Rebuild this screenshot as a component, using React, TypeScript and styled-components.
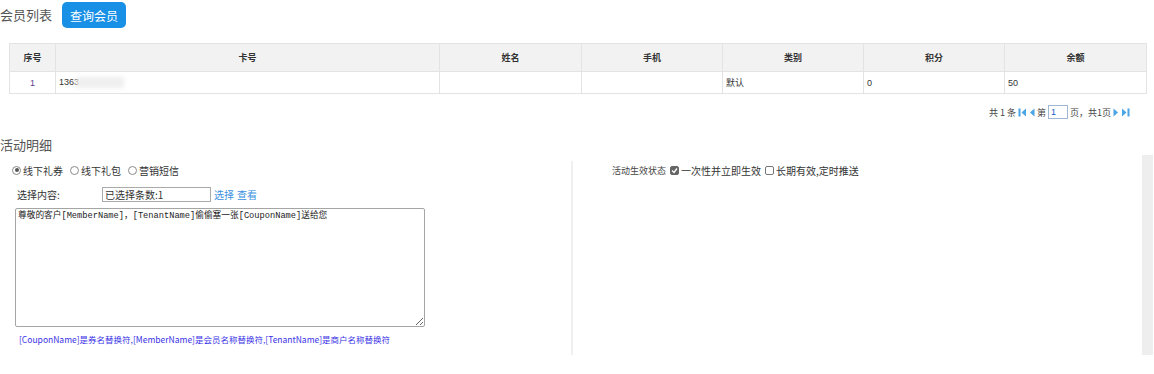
import React, { useState } from 'react'
import styled, { createGlobalStyle } from 'styled-components'

const GlobalStyle = createGlobalStyle`
  body {
    margin: 0;
    background: #fff;
    font-family: "Liberation Sans", "Noto Sans CJK SC", sans-serif;
    color: #333;
  }
`

const Page = styled.div`
  width: 1154px;
  height: 374px;
  overflow: hidden;
`

const HeadBar = styled.div`
  display: flex;
  align-items: center;
  gap: 10px;
  height: 26px;
  padding-top: 2px;
`

const Title = styled.div`
  font-size: 13px;
  color: #555;
  line-height: 18px;
  font-family: "Noto Sans CJK SC", sans-serif;
`

const QueryButton = styled.button`
  height: 26px;
  padding: 0 8px;
  border: none;
  border-radius: 5px;
  background: #1890e6;
  color: #fff;
  font-size: 12px;
  font-family: "Noto Sans CJK SC", sans-serif;
  cursor: pointer;
`

const Table = styled.table`
  margin: 15px 0 0 9px;
  width: 1137px;
  border-collapse: collapse;
  table-layout: fixed;
  font-size: 9px;
  th, td {
    border: 1px solid #e3e3e3;
    padding: 0 3px;
    white-space: nowrap;
    overflow: hidden;
  }
  th {
    height: 27px;
    background: #f2f2f2;
    font-weight: bold;
    color: #333;
    text-align: center;
  }
  td {
    height: 21px;
    color: #333;
  }
`

const IndexCell = styled.td`
  text-align: center;
  && {
    color: #5b3b8c;
  }
`

const Blurred = styled.span`
  display: inline-block;
  width: 48px;
  height: 11px;
  vertical-align: middle;
  background: #efefef;
  filter: blur(2px);
  margin-left: -3px;
`

const Pager = styled.div`
  display: flex;
  justify-content: flex-end;
  align-items: center;
  gap: 2px;
  height: 16px;
  margin-top: 10px;
  padding-right: 24px;
  font-size: 9px;
  color: #444;
  font-family: "Noto Sans CJK SC", sans-serif;
`

const PageInput = styled.input`
  width: 20px;
  height: 14px;
  box-sizing: border-box;
  border: 1px solid #9fb7d4;
  font-size: 9px;
  padding: 0 2px;
  color: #1a5ec9;
`

const PagerIcon = ({ kind }: { kind: 'first' | 'prev' | 'next' | 'last' }) => (
  <svg width={kind === 'first' || kind === 'last' ? 9 : 6} height="9" viewBox={kind === 'first' || kind === 'last' ? '0 0 9 9' : '0 0 6 9'}>
    {kind === 'first' && (
      <>
        <rect x="0.5" y="0.5" width="2" height="8" fill="#4ba4e6" />
        <polygon points="8,0.5 3.5,4.5 8,8.5" fill="#4ba4e6" />
      </>
    )}
    {kind === 'prev' && <polygon points="5.5,0.5 1,4.5 5.5,8.5" fill="#4ba4e6" />}
    {kind === 'next' && <polygon points="0.5,0.5 5,4.5 0.5,8.5" fill="#4ba4e6" />}
    {kind === 'last' && (
      <>
        <polygon points="1,0.5 5.5,4.5 1,8.5" fill="#4ba4e6" />
        <rect x="6.5" y="0.5" width="2" height="8" fill="#4ba4e6" />
      </>
    )}
  </svg>
)

const SectionTitle = styled(Title)`
  margin-top: 16px;
`

const Detail = styled.div`
  display: flex;
  height: 200px;
  margin-top: 1px;
`

const LeftPanel = styled.div`
  width: 571px;
  padding: 8px 0 0 10px;
  box-sizing: border-box;
  font-family: "Noto Sans CJK SC", sans-serif;
  font-size: 10px;
  color: #333;
`

const Divider = styled.div`
  width: 2px;
  margin-top: 6px;
  background: #efefef;
`

const RightPanel = styled.div`
  flex: 1;
  padding: 8px 0 0 39px;
  font-family: "Noto Sans CJK SC", sans-serif;
  font-size: 10px;
  color: #333;
`

const StateLabel = styled.span`
  font-size: 9px;
  color: #444;
`

const ScrollTrack = styled.div`
  width: 11px;
  margin-right: 1px;
  background: #eeeeee;
`

const OptionRow = styled.div`
  display: flex;
  align-items: center;
  height: 14px;
`

const RadioItem = styled.label`
  display: flex;
  align-items: center;
  gap: 2px;
  margin-right: 5px;
  cursor: pointer;
`

const RadioDot = styled.span<{ $on: boolean }>`
  width: 9px;
  height: 9px;
  margin-left: 2px;
  border-radius: 50%;
  border: 1px solid #8a8a8a;
  background: #fff;
  box-sizing: border-box;
  position: relative;
  &::after {
    content: '';
    display: ${p => (p.$on ? 'block' : 'none')};
    position: absolute;
    left: 1.5px;
    top: 1.5px;
    width: 4px;
    height: 4px;
    border-radius: 50%;
    background: #555;
  }
`

const PickRow = styled.div`
  display: flex;
  align-items: center;
  height: 14px;
  margin-top: 10px;
  padding-left: 7px;
`

const PickLabel = styled.span`
  width: 85px;
`

const PickInput = styled.input`
  width: 109px;
  height: 15px;
  box-sizing: border-box;
  border: 1px solid #aaa;
  font-size: 10px;
  padding: 0 2px;
  font-family: "Noto Sans CJK SC", sans-serif;
  color: #333;
`

const LinkText = styled.a`
  color: #3b8fe0;
  margin-left: 3px;
  text-decoration: none;
  cursor: pointer;
`

const Message = styled.textarea`
  display: block;
  margin: 7px 0 0 5px;
  width: 410px;
  height: 119px;
  box-sizing: border-box;
  border: 1px solid #a5a5a5;
  border-radius: 2px;
  padding: 1px 2px;
  font-family: "Liberation Mono", "Noto Sans CJK SC", monospace;
  font-size: 8.7px;
  line-height: 12px;
  color: #222;
`

const Hint = styled.div`
  margin: 6px 0 0 9px;
  font-size: 8.5px;
  color: #3a33e6;
`

const CheckBox = styled.span<{ $on: boolean }>`
  display: inline-flex;
  align-items: center;
  justify-content: center;
  width: 9px;
  height: 9px;
  box-sizing: border-box;
  border-radius: 2px;
  border: 1px solid ${p => (p.$on ? '#666' : '#777')};
  background: ${p => (p.$on ? '#666' : '#fff')};
  margin: 0 2px 0 4px;
`

const rows = [{ idx: 1, card: '1363', type: '默认', score: '0', balance: '50' }]

export default function App() {
  const [kind, setKind] = useState('coupon')
  const [once, setOnce] = useState(true)
  const [longTerm, setLongTerm] = useState(false)
  const kinds = [
    { key: 'coupon', label: '线下礼券' },
    { key: 'pack', label: '线下礼包' },
    { key: 'sms', label: '营销短信' }
  ]
  return (
    <Page>
      <GlobalStyle />
      <HeadBar>
        <Title>会员列表</Title>
        <QueryButton>查询会员</QueryButton>
      </HeadBar>

      <Table>
        <colgroup>
          <col style={{ width: 46 }} />
          <col style={{ width: 384 }} />
          <col style={{ width: 142 }} />
          <col style={{ width: 141 }} />
          <col style={{ width: 141 }} />
          <col style={{ width: 141 }} />
          <col style={{ width: 142 }} />
        </colgroup>
        <thead>
          <tr>
            <th>序号</th>
            <th>卡号</th>
            <th>姓名</th>
            <th>手机</th>
            <th>类别</th>
            <th>积分</th>
            <th>余额</th>
          </tr>
        </thead>
        <tbody>
          {rows.map(r => (
            <tr key={r.idx}>
              <IndexCell>{r.idx}</IndexCell>
              <td>
                {r.card}
                <Blurred />
              </td>
              <td></td>
              <td></td>
              <td>{r.type}</td>
              <td>{r.score}</td>
              <td>{r.balance}</td>
            </tr>
          ))}
        </tbody>
      </Table>

      <Pager>
        <span>共 1 条</span>
        <PagerIcon kind="first" />
        <PagerIcon kind="prev" />
        <span>第</span>
        <PageInput defaultValue="1" />
        <span>页，共1页</span>
        <PagerIcon kind="next" />
        <PagerIcon kind="last" />
      </Pager>

      <SectionTitle>活动明细</SectionTitle>

      <Detail>
        <LeftPanel>
          <OptionRow>
            {kinds.map(k => (
              <RadioItem key={k.key} onClick={() => setKind(k.key)}>
                <RadioDot $on={kind === k.key} />
                {k.label}
              </RadioItem>
            ))}
          </OptionRow>
          <PickRow>
            <PickLabel>选择内容:</PickLabel>
            <PickInput defaultValue="已选择条数:1" />
            <LinkText>选择</LinkText>
            <LinkText>查看</LinkText>
          </PickRow>
          <Message defaultValue="尊敬的客户[MemberName]，[TenantName]偷偷塞一张[CouponName]送给您" />
          <Hint>[CouponName]是券名替换符,[MemberName]是会员名称替换符,[TenantName]是商户名称替换符</Hint>
        </LeftPanel>
        <Divider />
        <RightPanel>
          <OptionRow>
            <StateLabel>活动生效状态</StateLabel>
            <CheckBox $on={once} onClick={() => setOnce(!once)}>
              {once && (
                <svg width="7" height="7" viewBox="0 0 7 7">
                  <polyline points="1,3.5 3,5.5 6,1.5" fill="none" stroke="#fff" strokeWidth="1.3" />
                </svg>
              )}
            </CheckBox>
            <span>一次性并立即生效</span>
            <CheckBox $on={longTerm} onClick={() => setLongTerm(!longTerm)} />
            <span>长期有效,定时推送</span>
          </OptionRow>
        </RightPanel>
        <ScrollTrack />
      </Detail>
    </Page>
  )
}
